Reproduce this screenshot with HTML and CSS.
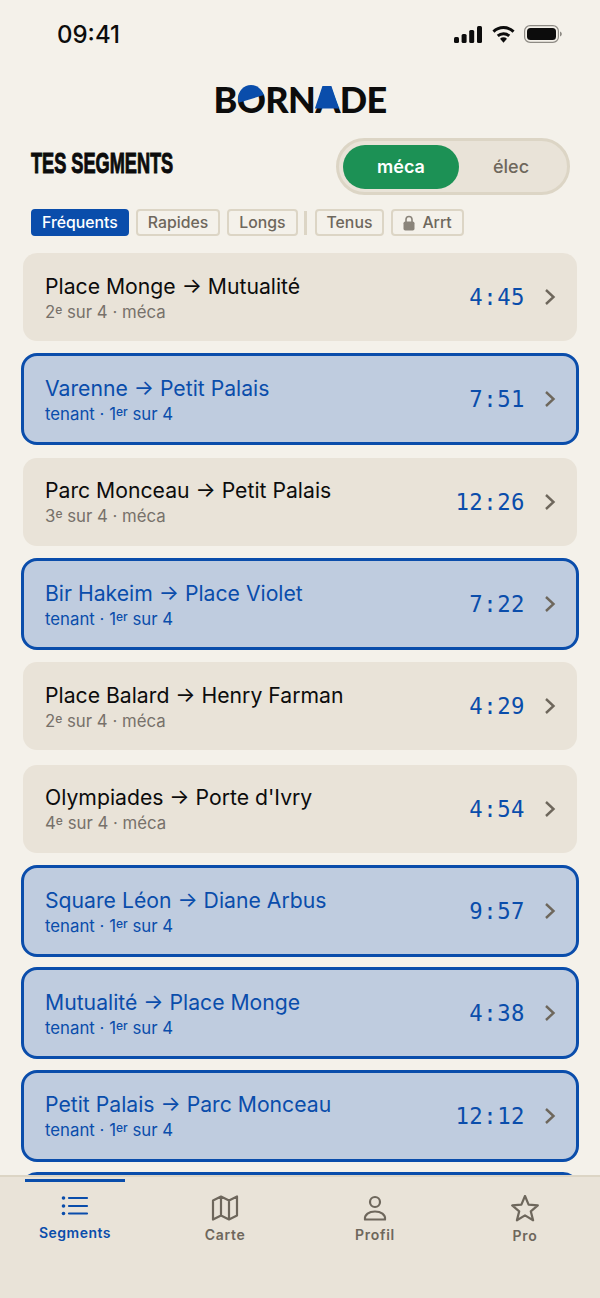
FILE: index.html
```html
<!DOCTYPE html>
<html lang="fr">
<head>
  <meta charset="UTF-8" />
  <meta name="viewport" content="width=device-width, initial-scale=1.0" />
  <title>Bornade - Segments</title>
  <link rel="stylesheet" href="styles.css">
</head>
<body>
  <div class="screen">
    <div class="status-bar">
      <span class="clock">09:41</span>
      <div class="status-icons">
        <svg width="28" height="17" viewBox="0 0 28 17"><rect x="0" y="11" width="5" height="6" rx="1.5"/><rect x="7.600" y="8" width="5" height="9" rx="1.5"/><rect x="15.200" y="4" width="5" height="13" rx="1.5"/><rect x="23" y="0" width="5" height="17" rx="1.5"/></svg>
        <svg width="23" height="18" viewBox="0 0 24 18"><path d="M1.5 6.5a15 15 0 0 1 21 0" class="wifi-arc"/><path d="M6 11a9 9 0 0 1 12 0" class="wifi-arc"/><path d="M12 18l-3.6-4a5 5 0 0 1 7.2 0z"/></svg>
        <svg width="38" height="18" viewBox="0 0 38 18"><rect x="0.6" y="0.6" width="33.8" height="16.8" rx="5.5" class="batt-edge"/><rect x="3" y="3" width="29" height="12" rx="3.5"/><path d="M36 6.5c1.2.4 1.8 1.3 1.8 2.5s-.6 2.1-1.8 2.5z" class="batt-cap"/></svg>
      </div>
    </div>

    <div class="logo"><span>B</span><span class="logo-o">O</span><span>RN</span><span class="logo-a">A</span><span>DE</span></div>

    <div class="head-row">
      <h1>TES SEGMENTS</h1>
      <div class="toggle">
        <span class="toggle-item active">méca</span>
        <span class="toggle-item">élec</span>
      </div>
    </div>

    <div class="chips">
      <span class="chip selected">Fréquents</span>
      <span class="chip">Rapides</span>
      <span class="chip">Longs</span>
      <span class="chip-sep"></span>
      <span class="chip">Tenus</span>
      <span class="chip">
        <svg class="lock" width="12" height="16" viewBox="0 0 12 16"><path d="M3 7V4.500a3 3 0 0 1 6 0V7" class="lock-loop"/><rect x="0.500" y="6.500" width="11" height="9" rx="1.800"/></svg>
        Arrt
      </span>
    </div>

    <div class="list">
      <a class="row">
        <div class="row-text"><div class="row-name">Place Monge → Mutualité</div><div class="row-sub">2<sup>e</sup> sur 4 · méca</div></div>
        <span class="row-time">4:45</span>
        <svg class="chev" width="12" height="18" viewBox="0 0 12 18"><path d="M2 2l7.500 7L2 16"/></svg>
      </a>
      <a class="row held">
        <div class="row-text"><div class="row-name">Varenne → Petit Palais</div><div class="row-sub">tenant · 1<sup>er</sup> sur 4</div></div>
        <span class="row-time">7:51</span>
        <svg class="chev" width="12" height="18" viewBox="0 0 12 18"><path d="M2 2l7.500 7L2 16"/></svg>
      </a>
      <a class="row">
        <div class="row-text"><div class="row-name">Parc Monceau → Petit Palais</div><div class="row-sub">3<sup>e</sup> sur 4 · méca</div></div>
        <span class="row-time">12:26</span>
        <svg class="chev" width="12" height="18" viewBox="0 0 12 18"><path d="M2 2l7.500 7L2 16"/></svg>
      </a>
      <a class="row held">
        <div class="row-text"><div class="row-name">Bir Hakeim → Place Violet</div><div class="row-sub">tenant · 1<sup>er</sup> sur 4</div></div>
        <span class="row-time">7:22</span>
        <svg class="chev" width="12" height="18" viewBox="0 0 12 18"><path d="M2 2l7.500 7L2 16"/></svg>
      </a>
      <a class="row">
        <div class="row-text"><div class="row-name">Place Balard → Henry Farman</div><div class="row-sub">2<sup>e</sup> sur 4 · méca</div></div>
        <span class="row-time">4:29</span>
        <svg class="chev" width="12" height="18" viewBox="0 0 12 18"><path d="M2 2l7.500 7L2 16"/></svg>
      </a>
      <a class="row">
        <div class="row-text"><div class="row-name">Olympiades → Porte d'Ivry</div><div class="row-sub">4<sup>e</sup> sur 4 · méca</div></div>
        <span class="row-time">4:54</span>
        <svg class="chev" width="12" height="18" viewBox="0 0 12 18"><path d="M2 2l7.500 7L2 16"/></svg>
      </a>
      <a class="row held">
        <div class="row-text"><div class="row-name">Square Léon → Diane Arbus</div><div class="row-sub">tenant · 1<sup>er</sup> sur 4</div></div>
        <span class="row-time">9:57</span>
        <svg class="chev" width="12" height="18" viewBox="0 0 12 18"><path d="M2 2l7.500 7L2 16"/></svg>
      </a>
      <a class="row held">
        <div class="row-text"><div class="row-name">Mutualité → Place Monge</div><div class="row-sub">tenant · 1<sup>er</sup> sur 4</div></div>
        <span class="row-time">4:38</span>
        <svg class="chev" width="12" height="18" viewBox="0 0 12 18"><path d="M2 2l7.500 7L2 16"/></svg>
      </a>
      <a class="row held">
        <div class="row-text"><div class="row-name">Petit Palais → Parc Monceau</div><div class="row-sub">tenant · 1<sup>er</sup> sur 4</div></div>
        <span class="row-time">12:12</span>
        <svg class="chev" width="12" height="18" viewBox="0 0 12 18"><path d="M2 2l7.500 7L2 16"/></svg>
      </a>
      <a class="row held"></a>
    </div>

    <nav class="tabs">
      <a class="tab current">
        <svg class="tab-icon" width="28" height="24" viewBox="0 0 28 24"><circle cx="2.500" cy="3" r="1.800" class="dot"/><circle cx="2.500" cy="11" r="1.800" class="dot"/><circle cx="2.500" cy="18.500" r="1.800" class="dot"/><path d="M8 3h18M8 11h18M8 18.500h18"/></svg>
        <span>Segments</span>
      </a>
      <a class="tab">
        <svg class="tab-icon" width="28" height="26" viewBox="0 0 28 26"><path d="M2 5.500l8-4 8 4 8-4v19l-8 4-8-4-8 4zM10 1.500v19M18 5.500v19"/></svg>
        <span>Carte</span>
      </a>
      <a class="tab">
        <svg class="tab-icon" width="26" height="26" viewBox="0 0 26 26"><circle cx="13" cy="7" r="5"/><path d="M3 24.500c-.6-5 4-8 10-8s10.600 3 10 8z"/></svg>
        <span>Profil</span>
      </a>
      <a class="tab">
        <svg class="tab-icon" width="30" height="27" viewBox="0 0 30 27"><path d="M15 1l3.600 8.700 9.200.7-7 6 2.300 8.900-8.100-4.900-8.100 4.900 2.300-8.900-7-6 9.200-.7z"/></svg>
        <span>Pro</span>
      </a>
    </nav>
  </div>
</body>
</html>
```

FILE: styles.css
```css
* {
  box-sizing: border-box;
}
body {
  margin: 0;
  background: #f4f1ea;
  font-family: Inter, "Liberation Sans", sans-serif;
}
.screen {
  height: 1298px;
  display: flex;
  flex-direction: column;
  overflow: hidden;
}

/* status bar */
.status-bar {
  height: 68px;
  flex: none;
  display: flex;
  justify-content: space-between;
  align-items: center;
  padding: 0 38px 0 57px;
}
.clock {
  font-size: 24px;
  font-weight: 500;
  color: #0c0c0c;
}
.status-icons {
  display: flex;
  align-items: center;
  gap: 9.500px;
  fill: #0c0c0c;
}
.wifi-arc {
  fill: none;
  stroke: #0c0c0c;
  stroke-width: 3;
}
.batt-edge {
  fill: none;
  stroke: #8d8a84;
  stroke-width: 1.200;
}
.batt-cap {
  fill: #8d8a84;
}

/* logo */
.logo {
  flex: none;
  height: 42px;
  margin-top: 10px;
  display: flex;
  justify-content: center;
  align-items: center;
  font-family: Lato, sans-serif;
  font-size: 36px;
  font-weight: 900;
  letter-spacing: -0.700px;
  color: #0c0c0c;
}
.logo-o,
.logo-a {
  position: relative;
}
.logo-o::after {
  content: "";
  position: absolute;
  left: 1px;
  right: 1.500px;
  top: 50%;
  height: 28px;
  margin-top: -14px;
  border-radius: 50%;
  background: #0a4dab;
  clip-path: polygon(0 0, 100% 0, 100% 36%, 0 64%);
}
.logo-a::after {
  content: "";
  position: absolute;
  left: 50%;
  top: 50%;
  width: 24px;
  height: 23px;
  margin: -13.500px 0 0 -12.500px;
  background: #0a4dab;
  clip-path: polygon(32% 0, 68% 0, 100% 100%, 0 100%);
}

/* heading + toggle */
.head-row {
  flex: none;
  height: 57px;
  margin-top: 18px;
  padding: 0 30px 0 31px;
  display: flex;
  justify-content: space-between;
  align-items: center;
}
h1 {
  margin: 0 0 7px;
  font-family: "Liberation Sans", sans-serif;
  font-size: 30px;
  font-weight: 700;
  color: #0c0c0c;
  -webkit-text-stroke: 1px #0c0c0c;
  white-space: nowrap;
  transform: scaleX(0.605);
  transform-origin: left center;
}
.toggle {
  width: 234px;
  height: 57px;
  padding: 4px;
  display: flex;
  align-items: center;
  background: #e9e3d8;
  border: 3px solid #dcd5c5;
  border-radius: 29px;
}
.toggle-item {
  flex: 1;
  height: 44px;
  display: flex;
  justify-content: center;
  align-items: center;
  font-size: 18px;
  font-weight: 500;
  color: #6e675c;
  border-radius: 22px;
}
.toggle-item.active {
  flex: none;
  width: 116px;
  font-weight: 600;
  background: #1c9155;
  color: #fff;
}

/* filter chips */
.chips {
  flex: none;
  margin-top: 14px;
  padding-left: 31px;
  display: flex;
  align-items: center;
  gap: 7px;
}
.chip {
  height: 27px;
  padding: 0 10px;
  display: flex;
  align-items: center;
  gap: 7px;
  font-size: 15.800px;
  font-weight: 500;
  color: #6e675c;
  border: 2.500px solid #dcd5c5;
  border-radius: 4px;
}
.chip.selected {
  padding: 0 9px;
  background: #0a4dab;
  border-color: #0a4dab;
  color: #fff;
}
.chip-sep {
  width: 3px;
  height: 24px;
  margin: 0 1px 0 -1px;
  background: #dcd5c5;
}
.lock {
  fill: #8a847a;
}
.lock-loop {
  fill: none;
  stroke: #8a847a;
  stroke-width: 1.600;
}

/* segments list */
.list {
  flex: 1;
  min-height: 0;
  margin-top: 17px;
  padding: 0 23px;
  display: flex;
  flex-direction: column;
  gap: 14.350px;
  overflow: hidden;
}
.row {
  flex: none;
  height: 88px;
  padding: 0 21px 0 22px;
  display: flex;
  align-items: center;
  background: #e9e3d8;
  border-radius: 14px;
}
.row.held {
  background: #bfccdf;
  outline: 3px solid #0a4dab;
  outline-offset: -1px;
}
.row-text {
  flex: 1;
  min-width: 0;
  padding-bottom: 1px;
}
.row-name {
  font-size: 21.200px;
  line-height: 28px;
  color: #0c0c0c;
}
.row-sub {
  margin-top: 2px;
  font-size: 16.800px;
  line-height: 20px;
  color: #77716a;
}
.row-sub sup {
  font-size: 12px;
  font-weight: 500;
  line-height: 0;
  vertical-align: 4px;
}
.held .row-name,
.held .row-sub {
  color: #0a4dab;
}
.row-time {
  font-family: "DejaVu Sans Mono", monospace;
  font-size: 22.300px;
  letter-spacing: 0.500px;
  color: #0a4dab;
}
.chev {
  margin-left: 19px;
  fill: none;
  stroke: #6e675c;
  stroke-width: 2.400;
}

/* bottom tabs */
.tabs {
  flex: none;
  height: 123px;
  display: flex;
  align-items: flex-start;
  background: #e9e3d8;
  border-top: 2px solid #dcd5c5;
  position: relative;
}
.tab {
  flex: 1;
  padding-top: 18px;
  display: flex;
  flex-direction: column;
  align-items: center;
  gap: 5px;
  font-size: 14px;
  font-weight: 600;
  letter-spacing: 0.700px;
  color: #6e675c;
}
.tab.current {
  letter-spacing: 0.500px;
  color: #0a4dab;
  position: relative;
}
.tab.current::before {
  content: "";
  position: absolute;
  left: 25px;
  top: 2px;
  width: 100px;
  height: 3px;
  background: #0a4dab;
}
.tab-icon {
  fill: none;
  stroke: currentColor;
  stroke-width: 2.200;
  stroke-linejoin: round;
  stroke-linecap: round;
}
.dot {
  fill: currentColor;
  stroke: none;
}
```
